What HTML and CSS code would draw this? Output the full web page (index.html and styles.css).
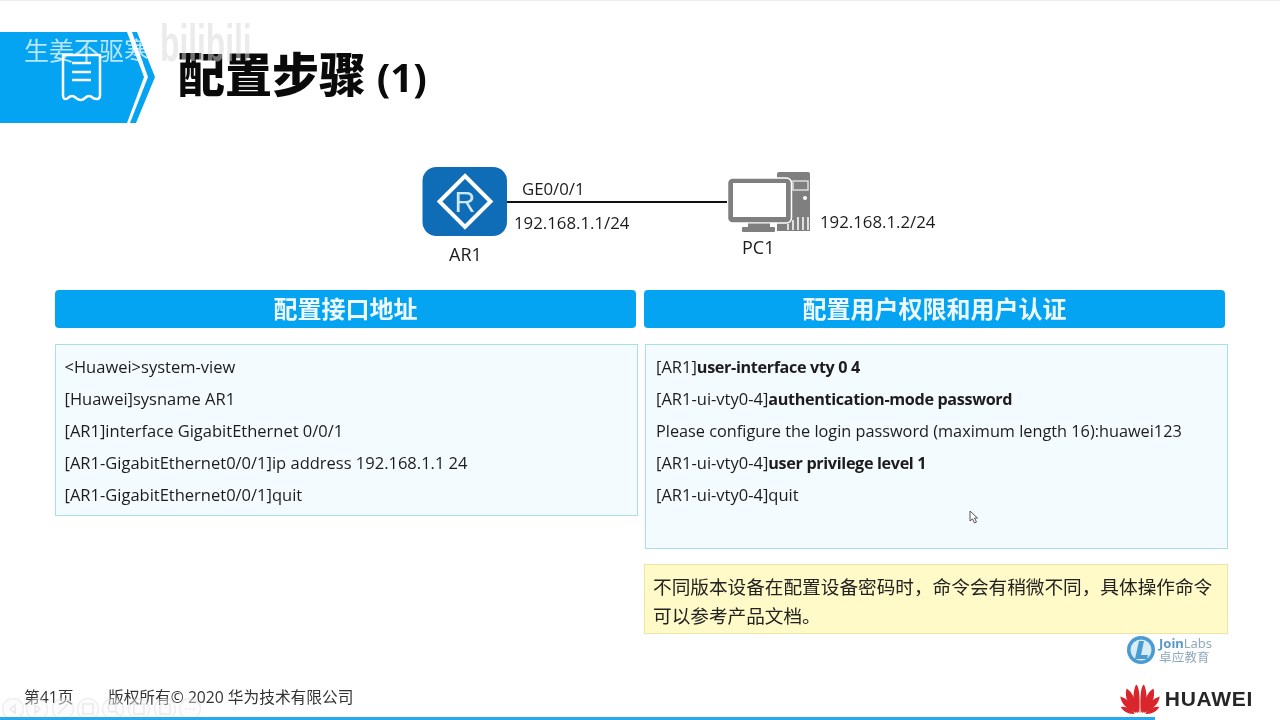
FILE: index.html
```html
<!DOCTYPE html>
<html lang="zh-CN">
<head>
<meta charset="utf-8">
<title>配置步骤 (1)</title>
<link rel="stylesheet" href="styles.css">
</head>
<body>
<div class="slide">
  <header class="header">
    <svg class="banner" viewBox="0 0 156 91" width="156" height="91">
      <polygon points="0,0 127,0 144,45 127,91 0,91" fill="#04a4f3"/>
      <polygon points="132,0 137,0 155,45 136,91 130,91 148,45" fill="#04a4f3"/>
      <g fill="none" stroke="#fff" stroke-width="2.500">
        <path d="M63 23V63Q63 69 68 66Q72 62 76 66Q81 70 85 66Q89 62 93 66Q100 69 100 63V23Z" stroke-linejoin="round"/>
        <path d="M72 31H91M72 40H91M72 48H91"/>
      </g>
    </svg>
    <h1 class="title">配置步骤 <span class="title-num">(1)</span></h1>
  </header>
  <div class="wm-name">生姜不驱寒</div>
  <div class="wm-logo">bilibili</div>

  <section class="topology">
    <div class="link"></div>
    <svg class="router" viewBox="0 0 85 70" width="85" height="70">
      <rect x="0.500" width="84.500" height="69" rx="14" fill="#0f6cb6"/>
      <polygon points="43,9 68.500,34.500 43,60 17.500,34.500" fill="none" stroke="#fff" stroke-width="4"/>
      <text x="43" y="45" text-anchor="middle" class="router-r">R</text>
    </svg>
    <svg class="pc" viewBox="0 0 84 60" width="84" height="60">
      <path d="M50 2Q50 0 52 0H81Q83 0 83 2V59H50Z" fill="#7f7f7f"/>
      <rect x="66" y="9" width="15" height="9" fill="none" stroke="#ddd" stroke-width="1.500"/>
      <circle cx="78" cy="26" r="2" fill="#fff"/>
      <path d="M61 58V52M66 58V48M71 58V45M76 58V45M81 58V45" stroke="#fff" stroke-width="1.500"/>
      <rect x="0.500" y="6" width="64" height="45" rx="5" fill="#7f7f7f" stroke="#fff" stroke-width="1.500"/>
      <rect x="6" y="11" width="53" height="34" fill="#fff"/>
      <rect x="21" y="51.500" width="22" height="4" fill="#7f7f7f"/>
      <rect x="15" y="55" width="33" height="5" rx="1" fill="#7f7f7f"/>
    </svg>
    <span class="label label-ge">GE0/0/1</span>
    <span class="label label-ip1">192.168.1.1/24</span>
    <span class="label label-ar">AR1</span>
    <span class="label label-pc">PC1</span>
    <span class="label label-ip2">192.168.1.2/24</span>
  </section>

  <main class="columns">
    <section class="col">
      <h2 class="col-head">配置接口地址</h2>
      <div class="cmd-box">
        <p>&lt;Huawei&gt;system-view</p>
        <p>[Huawei]sysname AR1</p>
        <p>[AR1]interface GigabitEthernet 0/0/1</p>
        <p>[AR1-GigabitEthernet0/0/1]ip address 192.168.1.1 24</p>
        <p>[AR1-GigabitEthernet0/0/1]quit</p>
      </div>
    </section>
    <section class="col">
      <h2 class="col-head">配置用户权限和用户认证</h2>
      <div class="cmd-box cmd-box-tall">
        <p>[AR1]<b>user-interface vty 0 4</b></p>
        <p>[AR1-ui-vty0-4]<b>authentication-mode password</b></p>
        <p class="prompt">Please configure the login password (maximum length 16):huawei123</p>
        <p>[AR1-ui-vty0-4]<b>user privilege level 1</b></p>
        <p>[AR1-ui-vty0-4]quit</p>
      </div>
      <div class="note">不同版本设备在配置设备密码时，命令会有稍微不同，具体操作命令可以参考产品文档。</div>
    </section>
  </main>

  <svg class="cursor" viewBox="0 0 10 14" width="10" height="14">
    <path d="M1 1V11L3.500 8.800L5.500 13L7.500 12L5.500 8H8.500Z" fill="#fff" stroke="#555" stroke-width="1"/>
  </svg>

  <div class="joinlabs">
    <svg viewBox="0 0 28 28" width="28" height="28">
      <circle cx="14" cy="14" r="14" fill="#4a9bd2"/>
      <circle cx="14" cy="14" r="10.500" fill="#d8ecf6"/>
      <path d="M12 5H17L14 19H21L20 23H8Z" fill="#4a9bd2"/>
    </svg>
    <div class="jl-text">
      <span class="jl-en"><b>Join</b>Labs</span>
      <span class="jl-cn">卓应教育</span>
    </div>
  </div>

  <footer class="footer">
    <span class="page">第41页</span>
    <span class="copy">版权所有© 2020 华为技术有限公司</span>
    <div class="brand">
      <svg viewBox="0 0 40 30" width="40" height="30">
        <g fill="#d9262c">
          <path d="M19.300 29C12 21 12.500 8 16 0.500C20 2 20 20 19.300 29Z"/>
          <path d="M20.700 29C28 21 27.500 8 24 0.500C20 2 20 20 20.700 29Z"/>
          <path d="M18 29C9 24 4 14 6.500 4.500C12 7 18 20 18 29Z"/>
          <path d="M22 29C31 24 36 14 33.500 4.500C28 7 22 20 22 29Z"/>
          <path d="M16.500 29C8 26 1 20 0.300 12.500C7 14 15 23 16.500 29Z"/>
          <path d="M23.500 29C32 26 39 20 39.700 12.500C33 14 25 23 23.500 29Z"/>
          <path d="M15 29.800C9 30.500 3 27.500 0.800 23C5 21.500 12 25.500 15 29.800Z"/>
          <path d="M25 29.800C31 30.500 37 27.500 39.200 23C35 21.500 28 25.500 25 29.800Z"/>
        </g>
      </svg>
      <span class="brand-name">HUAWEI</span>
    </div>
  </footer>

  <svg class="player-tools" viewBox="0 0 200 24" width="200" height="24">
    <g fill="#fafafa" stroke="#dcdcdc" stroke-width="1.500">
      <circle cx="12" cy="12" r="10.500"/><circle cx="36" cy="12" r="10.500"/>
      <circle cx="62" cy="12" r="10.500"/><circle cx="87" cy="12" r="10.500"/>
      <circle cx="112" cy="12" r="10.500"/><circle cx="138" cy="12" r="10.500"/>
      <circle cx="164" cy="12" r="10.500"/><circle cx="189" cy="12" r="10.500"/>
    </g>
    <g fill="none" stroke="#cfcfcf" stroke-width="1.500">
      <path d="M14 8L9 12L14 16Z"/><path d="M34 8L39 12L34 16Z"/>
      <path d="M57 17L67 7"/><rect x="82" y="7" width="10" height="10"/>
      <circle cx="111" cy="11" r="4"/><path d="M114 14L118 18"/>
      <rect x="133" y="7" width="10" height="10"/><rect x="159" y="7" width="10" height="10"/>
      <path d="M184 12H194" stroke-dasharray="2 2"/>
    </g>
  </svg>
  <div class="progress"></div>
</div>
</body>
</html>
```
FILE: styles.css
```css
* { box-sizing: border-box; }
html, body { margin: 0; padding: 0; background: #fff; }
body { font-family: "Open Sans", "Noto Sans CJK SC", sans-serif; color: #1c1c1c; }
.slide {
  width: 1280px; height: 720px; position: relative; overflow: hidden;
  display: flex; flex-direction: column; background: #fff; filter: blur(0.35px);
  border-top: 1px solid #ececec;
}
.header { margin-top: 31px; height: 91px; display: flex; align-items: center; flex: none; }
.banner { display: block; flex: none; }
.title {
  margin: -6px 0 0 22px; font-size: 47px; line-height: 60px; font-weight: 900; color: #0a0a0a;
  font-family: "Noto Sans CJK SC", sans-serif; white-space: nowrap;
}
.title-num { font-family: "Open Sans", sans-serif; font-size: 40px; font-weight: 700; }
.wm-name {
  position: absolute; left: 24px; top: 34px; font-size: 25px; line-height: 28px;
  color: rgba(255,255,255,.72); font-family: "Noto Sans CJK SC", sans-serif;
}
.wm-logo {
  position: absolute; left: 160px; top: 12px; font: 700 52px/60px "Liberation Sans", sans-serif;
  color: rgba(215,215,215,.5); transform: scaleX(.61); transform-origin: left;
}
.topology { position: relative; height: 167px; flex: none; }
.link { position: absolute; left: 507px; top: 78px; width: 223px; height: 2px; background: #111; }
.router { position: absolute; left: 422px; top: 44px; }
.router-r { font: 400 29px "Liberation Sans", sans-serif; fill: #cfe8f8; }
.pc { position: absolute; left: 727px; top: 49px; }
.label { position: absolute; font-size: 16.800px; line-height: 22px; color: #1c1c1c; white-space: nowrap; }
.label-ge { left: 522px; top: 55px; }
.label-ip1 { left: 514px; top: 89px; }
.label-ar { left: 449px; top: 120px; font-size: 18px; }
.label-pc { left: 742px; top: 113px; font-size: 18px; }
.label-ip2 { left: 820px; top: 88px; }
.columns { display: grid; grid-template-columns: 589px 584px; padding-left: 55px; flex: none; }
.col { display: flex; flex-direction: column; min-width: 0; }
.col-head {
  margin: 0 0 16px; width: 581px; height: 38px; padding-bottom: 2px; border-radius: 4px; background: #04a4f3;
  color: #eef9ff; font: 700 24px/36px "Noto Sans CJK SC", sans-serif; text-align: center;
}
.cmd-box {
  width: 583px; height: 172px; padding: 6px 8.500px; background: #f4fbfe; border: 1.500px solid #a8e0ea;
}
.col + .col .cmd-box { margin-left: 1px; }
.cmd-box-tall { height: 205px; padding-left: 10px; }
.cmd-box p { margin: 0; font-size: 16.500px; line-height: 32px; white-space: nowrap; color: #1c1c1c; }
.cmd-box .prompt { font-size: 16.300px; }
.cmd-box b { font-weight: 700; font-size: 16.200px; letter-spacing: -0.35px; }
.note {
  margin-top: 15px; width: 584px; height: 70px; padding: 6px 8px;
  background: #fffac8; border: 1.500px solid #efe5a3;
  font: 400 18.650px/29px "Noto Sans CJK SC", sans-serif; color: #222;
}
.cursor { position: absolute; left: 969px; top: 509px; }
.joinlabs { position: absolute; left: 1127px; top: 635px; display: flex; gap: 4px; align-items: center; }
.jl-text { display: flex; flex-direction: column; color: #8fa9bb; }
.jl-en { font: 400 13px/14px "Noto Sans", sans-serif; }
.jl-en b { color: #5a98c6; }
.jl-cn { font: 400 12.500px/14px "Noto Sans CJK SC", sans-serif; letter-spacing: .2px; }
.footer { position: absolute; left: 0; right: 0; top: 680px; height: 36px; display: flex; align-items: center; }
.page, .copy { font-family: "Open Sans", "Noto Sans CJK SC", sans-serif; font-size: 15.700px; color: #333; white-space: nowrap; margin-top: -5px; }
.page { margin-left: 24px; width: 84px; }
.brand { margin-left: auto; margin-right: 27px; display: flex; align-items: center; gap: 5px; }
.brand svg { display: block; }
.brand-name { font: 700 21px/30px "Liberation Sans", sans-serif; color: #262626; letter-spacing: .7px; }
.player-tools { position: absolute; left: 1px; top: 696px; opacity: .45; }
.progress { position: absolute; left: 0; top: 716px; width: 1155px; height: 3px; background: #2aa8ec; }
```
